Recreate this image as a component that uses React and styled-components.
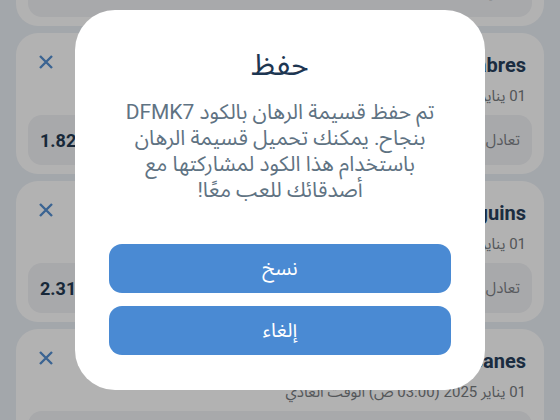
import React from 'react'
import styled, { createGlobalStyle } from 'styled-components'

const bets = [
    { id: 0, match: 'New York Rangers - Boston Bruins', date: '01 يناير 2025 (01:00 ص) الوقت العادي', odds: '2.04', pick: 'تعادل' },
    { id: 1, match: 'Boston Bruins - Buffalo Sabres', date: '01 يناير 2025 (01:30 ص) الوقت العادي', odds: '1.82', pick: 'تعادل' },
    { id: 2, match: 'Detroit - Pittsburgh Penguins', date: '01 يناير 2025 (02:00 ص) الوقت العادي', odds: '2.31', pick: 'تعادل' },
    { id: 3, match: 'Chicago - Carolina Hurricanes', date: '01 يناير 2025 (03:00 ص) الوقت العادي', odds: '1.95', pick: 'تعادل' },
]

const message = [
    'تم حفظ قسيمة الرهان بالكود DFMK7',
    'بنجاح. يمكنك تحميل قسيمة الرهان',
    'باستخدام هذا الكود لمشاركتها مع',
    'أصدقائك للعب معًا!',
]

const CloseIcon = () => (
    <svg width="16" height="16" viewBox="0 0 16 16">
        <path d="M2 2 L14 14 M14 2 L2 14" stroke="currentColor" strokeWidth="2.4" fill="none" />
    </svg>
)

const App = () => {
    return (
        <>
            <GlobalStyle />
            <Page>
                <BetList>
                    {bets.map(bet => (
                        <BetCard key={bet.id}>
                            <CardHeader>
                                <MatchName>{bet.match}</MatchName>
                                <RemoveButton><CloseIcon /></RemoveButton>
                            </CardHeader>
                            <MatchDate>{bet.date}</MatchDate>
                            <OddsRow>
                                <Pick>{bet.pick}</Pick>
                                <Odds>{bet.odds}</Odds>
                            </OddsRow>
                        </BetCard>
                    ))}
                </BetList>
            </Page>

            <Overlay>
                <Dialog>
                    <DialogTitle>حفظ</DialogTitle>
                    <DialogText>
                        {message.map((line, i) => <span key={i}>{line}</span>)}
                    </DialogText>
                    <Actions>
                        <ActionButton>نسخ</ActionButton>
                        <ActionButton>إلغاء</ActionButton>
                    </Actions>
                </Dialog>
            </Overlay>
        </>
    )
}

const arabic = `'Noto Sans Arabic', 'Noto Sans', 'DejaVu Sans', sans-serif`

const GlobalStyle = createGlobalStyle`
    * { box-sizing: border-box; }
    html, body {
        margin: 0;
        padding: 0;
        height: 420px;
        overflow: hidden;
        background: #eaeff5;
        font-family: Roboto, ${arabic};
    }
`

const Page = styled.div`
    height: 420px;
    overflow: hidden;
    direction: rtl;
`

// list is scrolled, so the first card sits mostly above the fold
const BetList = styled.div`
    display: flex;
    flex-direction: column;
    gap: 7px;
    padding: 0 16px;
    margin-top: -115px;
`

const BetCard = styled.div`
    height: 141px;
    padding: 20px 12px 9px;
    border-radius: 22px;
    background: #ffffff;
    display: flex;
    flex-direction: column;
`

const CardHeader = styled.div`
    display: flex;
    justify-content: space-between;
    align-items: center;
    height: 24px;
    padding: 0 6px 0 10px;
`

const MatchName = styled.div`
    font-family: Roboto, sans-serif;
    font-weight: 700;
    font-size: 20px;
    line-height: 24px;
    color: #28405c;
    direction: ltr;
`

const RemoveButton = styled.div`
    display: flex;
    color: #5590d2;
    margin-top: -6px;
`

const MatchDate = styled.div`
    margin-top: 8px;
    padding-right: 6px;
    font-family: Roboto, ${arabic};
    font-size: 15px;
    line-height: 22px;
    color: #777b80;
`

const OddsRow = styled.div`
    margin-top: 8px;
    height: 50px;
    border-radius: 14px;
    background: #f1f2f5;
    display: flex;
    justify-content: space-between;
    align-items: center;
    padding: 0 12px;
`

const Pick = styled.div`
    font-family: ${arabic};
    font-size: 15px;
    color: #7b7f85;
`

const Odds = styled.div`
    font-family: Roboto, sans-serif;
    font-weight: 700;
    font-size: 18px;
    color: #233a52;
`

const Overlay = styled.div`
    position: fixed;
    inset: 0;
    background: rgba(0, 0, 0, 0.3);
    display: flex;
    justify-content: center;
    align-items: center;
    padding-bottom: 20px;
`

const Dialog = styled.div`
    width: 410px;
    padding: 38px 20px 35px;
    border-radius: 40px;
    background: #ffffff;
    display: flex;
    flex-direction: column;
    align-items: stretch;
    direction: rtl;
`

const DialogTitle = styled.div`
    font-family: ${arabic};
    font-size: 30px;
    line-height: 36px;
    text-align: center;
    color: #1d3652;
`

const DialogText = styled.div`
    margin-top: 15px;
    display: flex;
    flex-direction: column;
    align-items: center;
    font-family: Roboto, ${arabic};
    font-size: 21px;
    line-height: 26px;
    color: #5f7383;

    span {
        white-space: nowrap;
    }
`

const Actions = styled.div`
    margin-top: 41px;
    padding: 0 14px;
    display: flex;
    flex-direction: column;
    gap: 13px;
`

const ActionButton = styled.button`
    height: 49px;
    border: none;
    border-radius: 13px;
    background: #4a8ad3;
    color: #ffffff;
    font-family: ${arabic};
    font-size: 20px;
    cursor: pointer;
`

export default App
